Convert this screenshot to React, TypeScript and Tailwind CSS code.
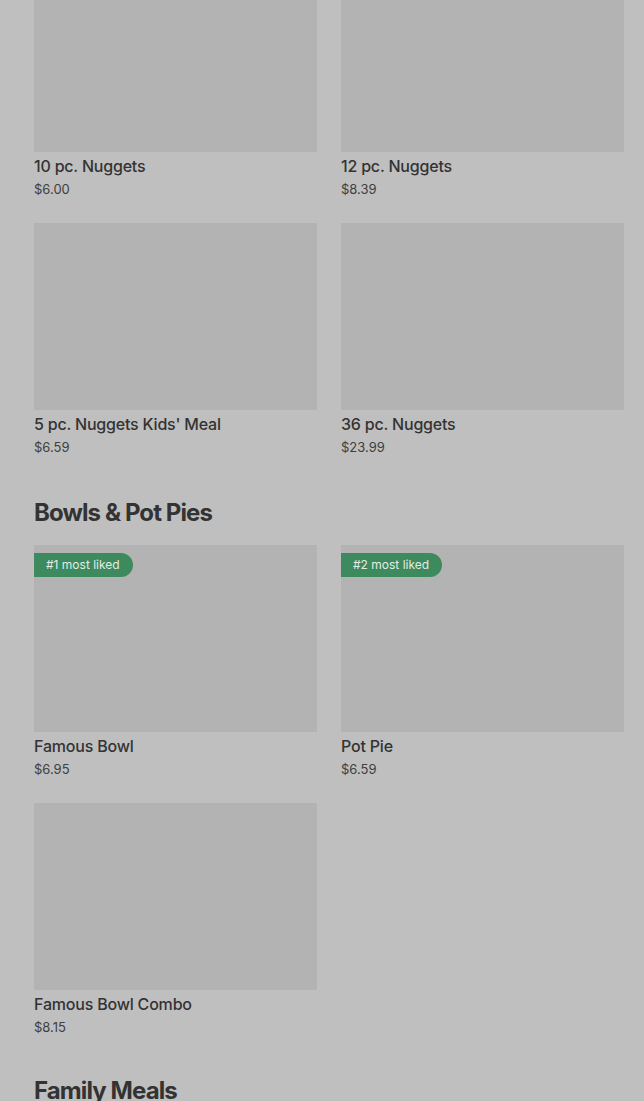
import React from "react";

type Item = { name: string; price: string; badge?: string };

const Card = ({ item }: { item: Item }) => (
  <div className="flex flex-col">
    <div className="relative h-[187px] bg-[#b3b3b3]">
      {item.badge && (
        <div className="absolute left-0 top-[8px] flex h-[24px] items-center rounded-r-full bg-[#3d8a5f] pl-[12px] pr-[13px] text-[12px] text-[#e3ece6]">
          {item.badge}
        </div>
      )}
    </div>
    <div className="mt-[4px] text-[16px] font-medium leading-[20px] tracking-[-0.2px] text-[#333333]">{item.name}</div>
    <div className="mt-[4px] text-[13px] leading-[18px] text-[#404040]">{item.price}</div>
  </div>
);

const Grid = ({ items }: { items: Item[] }) => (
  <div className="grid grid-cols-2 gap-x-[24px] gap-y-[25px]">
    {items.map((it) => (
      <Card key={it.name} item={it} />
    ))}
  </div>
);

export default function App() {
  return (
    <div
      className="min-h-[1101px] overflow-hidden bg-[#bfbfbf] pl-[34px] pr-[20px]"
      style={{ fontFamily: "Inter, 'Noto Sans', sans-serif" }}
    >
      <div className="mt-[-35px]">
        <Grid
          items={[
            { name: "10 pc. Nuggets", price: "$6.00" },
            { name: "12 pc. Nuggets", price: "$8.39" },
            { name: "5 pc. Nuggets Kids' Meal", price: "$6.59" },
            { name: "36 pc. Nuggets", price: "$23.99" },
          ]}
        />
        <h2 className="mt-[41px] text-[24px] font-bold leading-[32px] tracking-[-0.9px] text-[#333333]">
          Bowls &amp; Pot Pies
        </h2>
        <div className="mt-[16px]">
          <Grid
            items={[
              { name: "Famous Bowl", price: "$6.95", badge: "#1 most liked" },
              { name: "Pot Pie", price: "$6.59", badge: "#2 most liked" },
              { name: "Famous Bowl Combo", price: "$8.15" },
            ]}
          />
        </div>
        <h2 className="mt-[39px] text-[24px] font-bold leading-[32px] tracking-[-0.9px] text-[#333333]">
          Family Meals
        </h2>
      </div>
    </div>
  );
}
